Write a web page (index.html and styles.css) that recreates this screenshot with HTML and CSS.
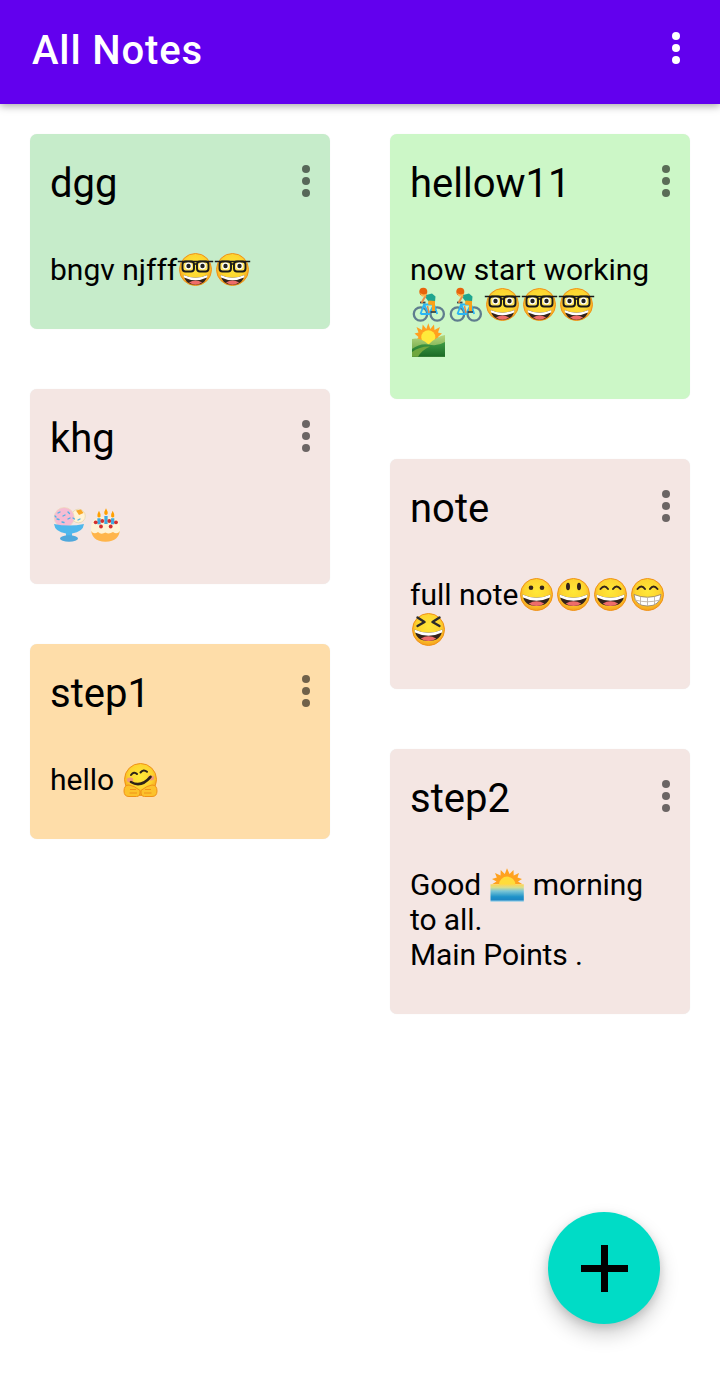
FILE: index.html
```html
<!DOCTYPE html>
<html lang="en">
<head>
<meta charset="utf-8">
<title>All Notes</title>
<link rel="stylesheet" href="styles.css">
</head>
<body>
<svg class="sprites" aria-hidden="true">
  <defs>
    <radialGradient id="faceFill" cx=".5" cy=".4" r=".62">
      <stop offset="0" stop-color="#FFE838"/><stop offset=".6" stop-color="#FDD42F"/><stop offset="1" stop-color="#F59A1B"/>
    </radialGradient>
    <linearGradient id="seaFill" x1="0" y1="0" x2="0" y2="1">
      <stop offset="0" stop-color="#FFD54F"/><stop offset=".18" stop-color="#D9DE8B"/><stop offset=".38" stop-color="#7CC7D6"/><stop offset=".72" stop-color="#1E92C9"/><stop offset=".88" stop-color="#1E88C4"/><stop offset="1" stop-color="#9FD3EA"/>
    </linearGradient>
    <linearGradient id="hillBack" x1="0" y1="0" x2="0" y2="1">
      <stop offset="0" stop-color="#B5D77F"/><stop offset="1" stop-color="#5C9A38"/>
    </linearGradient>
    <linearGradient id="hillFront" x1="0" y1="0" x2="0" y2="1">
      <stop offset="0" stop-color="#3E9B45"/><stop offset="1" stop-color="#1B6A26"/>
    </linearGradient>
    <g id="face"><circle cx="18.5" cy="17.5" r="16" fill="url(#faceFill)" stroke="#F09218" stroke-width="1"/></g>
    <g id="mouth">
      <path d="M4.500 17.500Q18.500 24 32.500 17.500Q31 29 18.500 29Q6 29 4.500 17.500Z" fill="#33231B"/>
      <path d="M4.500 17.500Q18.500 24 32.500 17.500L32 20.500Q18.500 27 5 20.500Z" fill="#fff"/>
      <path d="M10.800 26.500Q18.500 21.800 26.200 26.500Q23 29 18.500 29Q14 29 10.800 26.500Z" fill="#EE6C6A"/>
    </g>
    <symbol id="nerd" viewBox="0 0 37 35">
      <use href="#face"/>
      <use href="#mouth" transform="translate(2.800 8) scale(.85)"/>
      <rect x="5.500" y="9.500" width="11.500" height="10" rx="3" fill="#FFE45C" stroke="#1a1a1a" stroke-width="1.900"/>
      <rect x="20" y="9.500" width="11.500" height="10" rx="3" fill="#FFE45C" stroke="#1a1a1a" stroke-width="1.900"/>
      <path d="M.8 9.500H36.200M17 12H20" stroke="#1a1a1a" stroke-width="1.700" fill="none"/>
      <circle cx="11.500" cy="14" r="3.400" fill="#fff"/><circle cx="25.500" cy="14" r="3.400" fill="#fff"/>
      <circle cx="11.500" cy="14" r="2.200" fill="#222"/><circle cx="25.500" cy="14" r="2.200" fill="#222"/>
    </symbol>
    <symbol id="grin" viewBox="0 0 37 35">
      <use href="#face"/><use href="#mouth"/>
      <circle cx="13" cy="10.800" r="2.300" fill="#33231B"/><circle cx="24" cy="10.800" r="2.300" fill="#33231B"/>
    </symbol>
    <symbol id="smiley" viewBox="0 0 37 35">
      <use href="#face"/><use href="#mouth"/>
      <ellipse cx="13" cy="9.500" rx="2" ry="3.800" fill="#33231B"/><ellipse cx="24" cy="9.500" rx="2" ry="3.800" fill="#33231B"/>
    </symbol>
    <symbol id="smile" viewBox="0 0 37 35">
      <use href="#face"/><use href="#mouth"/>
      <path d="M8.500 12Q12.500 7 16 12M21 12Q24.500 7 28.500 12" fill="none" stroke="#33231B" stroke-width="2" stroke-linecap="round"/>
    </symbol>
    <symbol id="beam" viewBox="0 0 37 35">
      <use href="#face"/>
      <path d="M8.500 12Q12.500 7 16 12M21 12Q24.500 7 28.500 12" fill="none" stroke="#33231B" stroke-width="2" stroke-linecap="round"/>
      <path d="M5 17.500Q18.500 23 32 17.500Q31 29 18.500 29Q6 29 5 17.500Z" fill="#fff" stroke="#8D7B6A" stroke-width=".8"/>
      <path d="M6 23Q18.500 26.500 31 23M11.500 20V27.500M18.500 21V29M25.500 20V27.500" fill="none" stroke="#BDB3A8" stroke-width=".9"/>
    </symbol>
    <symbol id="laugh" viewBox="0 0 37 35">
      <use href="#face"/><use href="#mouth"/>
      <path d="M7.500 5.500L14.500 10L7.500 14M29.500 5.500L22.500 10L29.500 14" fill="none" stroke="#2B2B2B" stroke-width="2.400" stroke-linecap="round" stroke-linejoin="round"/>
    </symbol>
    <symbol id="hug" viewBox="0 0 37 35">
      <circle cx="18.500" cy="17.500" r="16" fill="url(#faceFill)" stroke="#F09218" stroke-width="1"/>
      <ellipse cx="8" cy="18" rx="3.200" ry="2.400" fill="#F0997A"/><ellipse cx="29" cy="16" rx="3.200" ry="2.400" fill="#F0997A"/>
      <path d="M9 20Q19 26 28.500 14.800" fill="none" stroke="#2E2318" stroke-width="2.600" stroke-linecap="round"/>
      <path d="M9 13Q12 9 15 12M18.500 10.500Q21.500 6.800 25 9.800" fill="none" stroke="#2E2318" stroke-width="2" stroke-linecap="round"/>
      <path d="M2 29Q2 23 7 23Q12 23.500 18 28.500Q18.500 34.500 14.500 34.500H7Q2 34.500 2 29Z" fill="#FCC22C" stroke="#F09218" stroke-width="1"/>
      <path d="M35 29Q35 23 30 23Q25 23.500 19 28.500Q18.500 34.500 22.500 34.500H30Q35 34.500 35 29Z" fill="#FCC22C" stroke="#F09218" stroke-width="1"/>
      <path d="M8 27.500H14M7.500 31H15M29 27.500H23M29.500 31H22" stroke="#F09218" stroke-width="1" fill="none"/>
    </symbol>
    <symbol id="bike" viewBox="0 0 37 35">
      <circle cx="10.500" cy="27" r="6.700" fill="none" stroke="#5F7D8E" stroke-width="2.300"/>
      <circle cx="27.200" cy="27" r="6.700" fill="none" stroke="#5F7D8E" stroke-width="2.300"/>
      <path d="M10.500 27L14 17.500H24L27.200 27M14 17.500L19 27H10.500M19 27L24 17.500M22.500 14L24 17.500" fill="none" stroke="#29B6F6" stroke-width="1.800"/>
      <path d="M10 15.500H15.500" stroke="#37474F" stroke-width="1.800"/>
      <path d="M17.500 19L19 26" stroke="#E88A4A" stroke-width="1.500"/>
      <path d="M14 8.500L22 6.500L25.500 9.500L25 15L18.500 14.500Z" fill="#1FA58F"/>
      <path d="M18.500 13.500L25 14L25 24.500L21.800 24.500L22 18L18 17.500Z" fill="#F9A31B"/>
      <path d="M15.500 9L12 15" stroke="#EE8F45" stroke-width="2" stroke-linecap="round"/>
      <circle cx="13.300" cy="4.700" r="4" fill="#E8640C"/>
      <path d="M10 5.800Q13.500 8.800 16.800 6.200L15.500 9.500H12Z" fill="#FFB74D"/>
      <path d="M20.500 25H26" stroke="#37474F" stroke-width="1.800"/>
    </symbol>
    <symbol id="hills" viewBox="0 0 37 35">
      <path d="M18.300 1.300L20.300 7L24 2.500L24.500 8L30 5L28 10.500L32 11.500L28 15L31.500 20H5L8.500 15L4.500 11.500L8.500 10.500L6.500 5L12 8L12.700 2.500L16.300 7Z" fill="#FFA01F"/>
      <circle cx="18.300" cy="15.300" r="7" fill="#FFE93B"/>
      <path d="M2 17Q10 15 18.500 22.500Q27 14 35 13V34.700H2Z" fill="url(#hillBack)"/>
      <path d="M2 27Q10 21 18.500 22.500Q27 25 35 20V34.700H2Z" fill="url(#hillFront)"/>
      <path d="M2 34.700V30Q10 24 20 24.500Q12 28 8 34.700Z" fill="#6FA63E"/>
    </symbol>
    <symbol id="sunrise" viewBox="0 0 37 35">
      <path d="M18 1.300L20.500 7L24.500 3L24.700 8.500L30 6L28.500 10.500L33 12L29 14.500L33.500 17.300H3L7.500 14.500L3 12L7.800 10.500L6 6L11.500 8.500L11.700 3L15.800 7Z" fill="#FFA21F"/>
      <circle cx="18.200" cy="17.800" r="8.200" fill="#FFDC3A"/>
      <rect x="1.500" y="17.300" width="33.300" height="17.400" fill="url(#seaFill)"/>
    </symbol>
    <symbol id="sundae" viewBox="0 0 37 35">
      <circle cx="28.500" cy="9" r="6.800" fill="#FFF3D6" stroke="#E2D2A6" stroke-width=".7"/>
      <path d="M26 3.500L31 2.500L33.500 6L29 8Z" fill="#F9A825"/>
      <circle cx="14.200" cy="10.500" r="10" fill="#F6BCD3" stroke="#EFD9B8" stroke-width=".7"/>
      <path d="M8 6L10 5M13 9L15 8M18 5L19.500 6.500M7 12L9 12.500M18 12L20 11M12 15L14 15.500M5 9L6 10M23 11L24.500 12M28 13L30 12" stroke="#4FB3E8" stroke-width="1.300" stroke-linecap="round"/>
      <path d="M4 17Q19 20 34 17Q33 25 22 26.500V29H16V26.500Q5 25 4 17Z" fill="#4FB7EC"/>
      <ellipse cx="19" cy="31.500" rx="9" ry="3.200" fill="#4FA8DC"/>
    </symbol>
    <symbol id="cake" viewBox="0 0 37 35">
      <path d="M4 21Q4 34.700 18.500 34.700Q33 34.700 33 21Z" fill="#FFB54A"/>
      <path d="M4 21C4 12 10 9.700 18.500 9.700S33 12 33 21V24Q30 28 26 25Q22 27.500 18.500 25.500Q14 28 11 25Q7 28 4 24Z" fill="#FFF2D4"/>
      <path d="M12 11.300V17.300M19 9V17M25.700 11.300V17.300" stroke="#3FA9E0" stroke-width="3.300"/>
      <path d="M12 3.700Q9.800 7.500 10.400 9.500Q12 11.500 13.600 9.500Q14.200 7.500 12 3.700ZM19 1.300Q16.800 5 17.400 7Q19 9 20.600 7Q21.200 5 19 1.300ZM25.700 3.700Q23.500 7.500 24.100 9.500Q25.700 11.500 27.300 9.500Q27.900 7.500 25.700 3.700Z" fill="#FFA000"/>
      <circle cx="8.700" cy="15.300" r="1.900" fill="#D32F2F"/><circle cx="15.300" cy="14" r="1.900" fill="#D32F2F"/><circle cx="22.300" cy="14" r="1.900" fill="#D32F2F"/><circle cx="29" cy="15.300" r="1.900" fill="#D32F2F"/><circle cx="14" cy="19.500" r="1.900" fill="#D32F2F"/><circle cx="23.700" cy="19.500" r="1.900" fill="#D32F2F"/>
    </symbol>
    <symbol id="dots" viewBox="0 0 8 32">
      <circle cx="4" cy="4" r="4"/><circle cx="4" cy="16" r="4"/><circle cx="4" cy="28" r="4"/>
    </symbol>
  </defs>
</svg>

<header class="appbar">
  <h1 class="appbar-title">All Notes</h1>
  <svg class="dots dots-light" role="img" aria-label="More options"><use href="#dots"/></svg>
</header>

<main class="board">
  <section class="column">
    <article class="note note-mint">
      <div class="note-head"><h2 class="note-title">dgg</h2><svg class="dots"><use href="#dots"/></svg></div>
      <p class="note-body">bngv njfff<svg class="emoji" role="img" aria-label="nerd face"><use href="#nerd"/></svg><svg class="emoji" role="img" aria-label="nerd face"><use href="#nerd"/></svg></p>
    </article>
    <article class="note note-rose">
      <div class="note-head"><h2 class="note-title">khg</h2><svg class="dots"><use href="#dots"/></svg></div>
      <p class="note-body"><svg class="emoji" role="img" aria-label="ice cream"><use href="#sundae"/></svg><svg class="emoji" role="img" aria-label="birthday cake"><use href="#cake"/></svg></p>
    </article>
    <article class="note note-peach">
      <div class="note-head"><h2 class="note-title">step1</h2><svg class="dots"><use href="#dots"/></svg></div>
      <p class="note-body">hello <svg class="emoji" role="img" aria-label="hugging face"><use href="#hug"/></svg></p>
    </article>
  </section>
  <section class="column">
    <article class="note note-lime">
      <div class="note-head"><h2 class="note-title">hellow11</h2><svg class="dots"><use href="#dots"/></svg></div>
      <p class="note-body">now start working<br><svg class="emoji" role="img" aria-label="person biking"><use href="#bike"/></svg><svg class="emoji" role="img" aria-label="person biking"><use href="#bike"/></svg><svg class="emoji" role="img" aria-label="nerd face"><use href="#nerd"/></svg><svg class="emoji" role="img" aria-label="nerd face"><use href="#nerd"/></svg><svg class="emoji" role="img" aria-label="nerd face"><use href="#nerd"/></svg><br><svg class="emoji" role="img" aria-label="sunrise over mountains"><use href="#hills"/></svg></p>
    </article>
    <article class="note note-rose">
      <div class="note-head"><h2 class="note-title">note</h2><svg class="dots"><use href="#dots"/></svg></div>
      <p class="note-body">full note<svg class="emoji" role="img" aria-label="grinning face"><use href="#grin"/></svg><svg class="emoji" role="img" aria-label="smiling face"><use href="#smiley"/></svg><svg class="emoji" role="img" aria-label="smiling face with open mouth"><use href="#smile"/></svg><svg class="emoji" role="img" aria-label="beaming face"><use href="#beam"/></svg><svg class="emoji" role="img" aria-label="laughing face"><use href="#laugh"/></svg></p>
    </article>
    <article class="note note-rose">
      <div class="note-head"><h2 class="note-title">step2</h2><svg class="dots"><use href="#dots"/></svg></div>
      <p class="note-body note-body-tight">Good <svg class="emoji emoji-tight" role="img" aria-label="sunrise"><use href="#sunrise"/></svg> morning to all.<br>Main Points .</p>
    </article>
  </section>
</main>

<button class="fab" type="button" aria-label="Add note">
  <svg class="fab-icon" viewBox="0 0 47 47"><path d="M20 0h7v20h20v7H27v20h-7V27H0v-7h20z"/></svg>
</button>
</body>
</html>
```

FILE: styles.css
```css
* { box-sizing: border-box; }

html, body {
  margin: 0;
  height: 1383px;
  overflow: hidden;
  background: #fff;
  font-family: Roboto, "Liberation Sans", sans-serif;
  color: #000;
}

body { position: relative; }

.sprites { position: absolute; width: 0; height: 0; }

.appbar {
  display: flex;
  justify-content: space-between;
  align-items: flex-start;
  height: 104px;
  padding: 27px 40px 0 32px;
  background: #6200EE;
  box-shadow: 0 2px 8px rgba(0, 0, 0, .35);
  position: relative;
}

.appbar-title {
  margin: 0;
  font-size: 40px;
  line-height: 47px;
  font-weight: 500;
  letter-spacing: .85px;
  color: #fff;
}

.dots {
  flex: none;
  width: 8px;
  height: 32px;
  margin-top: 5px;
  fill: #000;
  fill-opacity: .56;
}

.dots-light { fill: #fff; fill-opacity: 1; }

.board {
  display: flex;
  gap: 60px;
  padding: 30px;
}

.column {
  display: flex;
  flex-direction: column;
  gap: 60px;
  width: 300px;
}

.note {
  padding: 26px 20px 42px;
  border-radius: 7px;
  box-shadow: 0 0 1px rgba(0, 0, 0, .1);
}

.note-mint { background: #C6ECCA; }
.note-lime { background: #CCF7C7; }
.note-rose { background: #F4E6E3; }
.note-peach { background: #FEDDA9; }

.note-head {
  display: flex;
  justify-content: space-between;
  align-items: flex-start;
}

.note-title {
  margin: 0;
  font-size: 40px;
  line-height: 47px;
  font-weight: 400;
}

.note-body {
  margin: 45px 0 0;
  font-size: 30px;
  line-height: 35px;
}

.note-body-tight { letter-spacing: -.1px; }

.emoji {
  width: 37px;
  height: 35px;
  vertical-align: top;
}

.fab {
  position: absolute;
  left: 548px;
  top: 1212px;
  display: flex;
  align-items: center;
  justify-content: center;
  width: 112px;
  height: 112px;
  padding: 0;
  border: 0;
  border-radius: 50%;
  background: #00DCC6;
  box-shadow: 0 10px 20px rgba(0, 0, 0, .2), 0 3px 8px rgba(0, 0, 0, .12);
}

.fab-icon { width: 47px; height: 47px; fill: #000; }
```
